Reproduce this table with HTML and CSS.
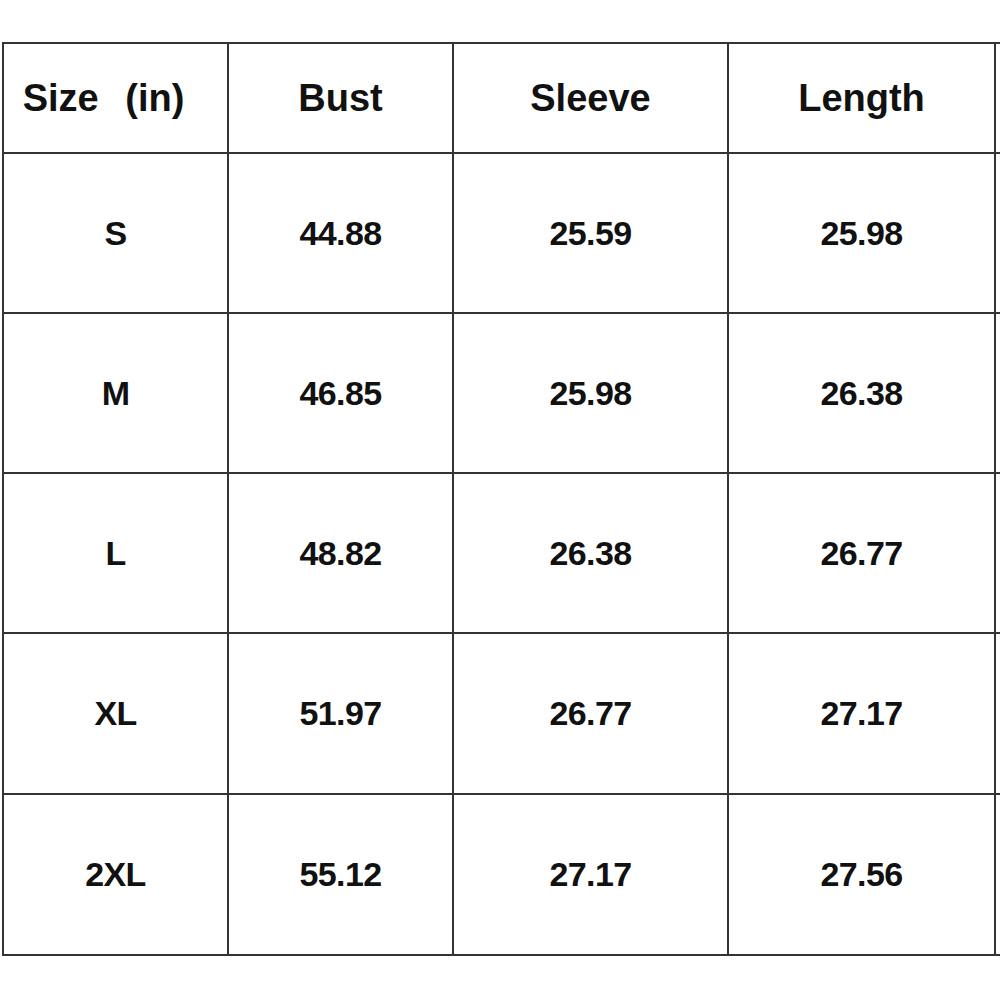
FILE: index.html
```html
<!DOCTYPE html>
<html>
<head>
<meta charset="utf-8">
<link rel="stylesheet" href="styles.css">
</head>
<body>
<table class="size-table">
  <colgroup>
    <col class="c1"><col class="c2"><col class="c3"><col class="c4"><col class="c5">
  </colgroup>
  <thead>
    <tr class="head-row">
      <th class="first">Size&ensp;&thinsp;(in)</th>
      <th>Bust</th>
      <th>Sleeve</th>
      <th>Length</th>
      <th></th>
    </tr>
  </thead>
  <tbody>
    <tr><td>S</td><td>44.88</td><td>25.59</td><td>25.98</td><td></td></tr>
    <tr><td>M</td><td>46.85</td><td>25.98</td><td>26.38</td><td></td></tr>
    <tr><td>L</td><td>48.82</td><td>26.38</td><td>26.77</td><td></td></tr>
    <tr><td>XL</td><td>51.97</td><td>26.77</td><td>27.17</td><td></td></tr>
    <tr><td>2XL</td><td>55.12</td><td>27.17</td><td>27.56</td><td></td></tr>
  </tbody>
</table>
</body>
</html>
```
FILE: styles.css
```css
html, body {
  margin: 0;
  padding: 0;
  background: #fff;
  overflow: hidden;
}
body {
  padding: 42px 0 0 2px;
  font-family: "Liberation Sans", Arial, sans-serif;
  color: #111;
}
.size-table {
  border-collapse: collapse;
  table-layout: fixed;
  width: 1217px;
}
.c1 { width: 225px; }
.c2 { width: 225px; }
.c3 { width: 275px; }
.c4 { width: 267px; }
.c5 { width: 225px; }
.size-table th,
.size-table td {
  border: 2px solid #333;
  text-align: center;
  vertical-align: middle;
  padding: 0;
  font-weight: bold;
}
.size-table th {
  height: 108px;
  font-size: 38px;
}
.size-table th.first {
  padding-right: 24px;
}
.size-table td {
  height: 158px;
  font-size: 34px;
  letter-spacing: -0.6px;
}
.size-table tbody tr:nth-child(n+4) td {
  height: 159px;
}
```
